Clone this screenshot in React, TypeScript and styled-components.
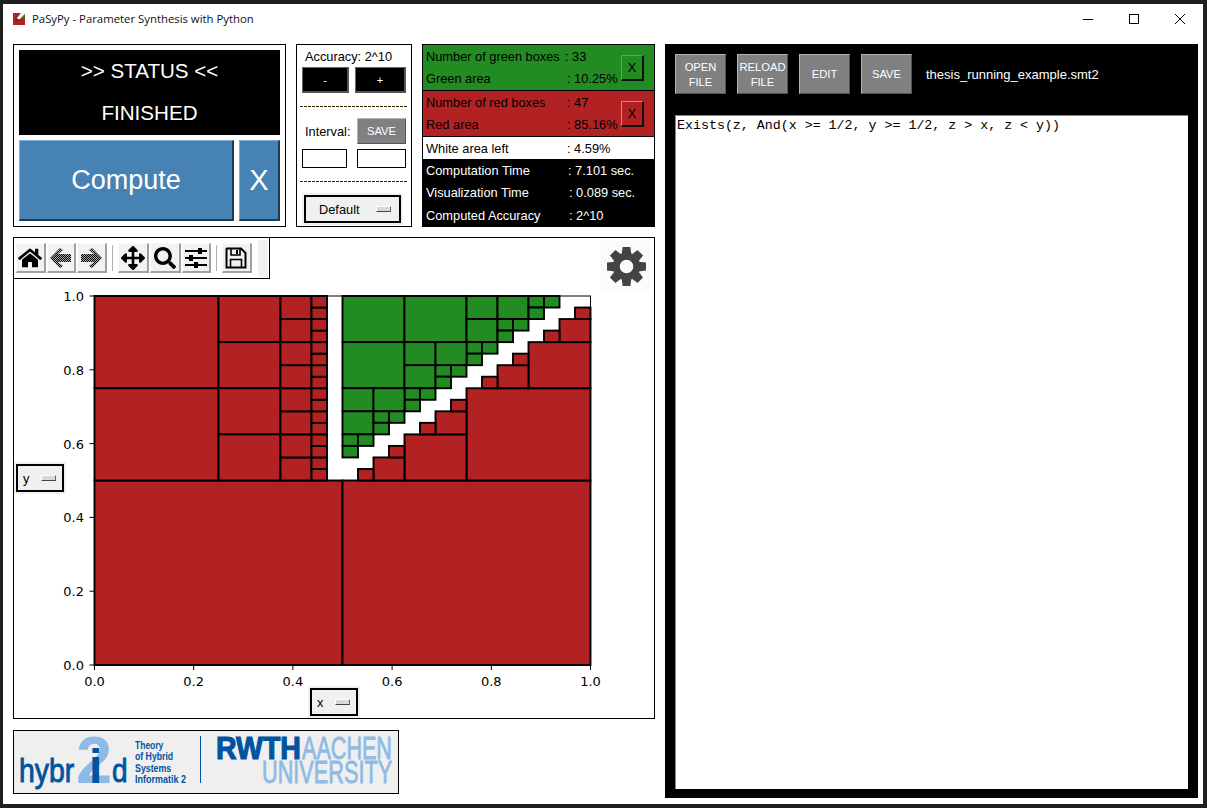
import React from 'react';
import styled, { createGlobalStyle } from 'styled-components';
import { FaArrowsAlt, FaHome, FaSearch } from 'react-icons/fa';

const GlobalStyle = createGlobalStyle`
  html, body {
    margin: 0;
    background: #1f1f1f;
  }
  * {
    box-sizing: border-box;
  }
`;

const sans = `"Liberation Sans", Arial, sans-serif`;

const Window = styled.div`
  width: 1200px;
  height: 800px;
  margin: 4px 0 0 3px;
  background: #fff;
  display: flex;
  flex-direction: column;
  font-family: ${sans};
  font-size: 12.8px;
  color: #000;
  overflow: hidden;
`;

const TitleBar = styled.div`
  height: 32px;
  flex: none;
  display: flex;
  align-items: center;
  padding: 0 0 3px 10px;
`;

const TitleText = styled.span`
  margin-left: 7px;
  flex: 1;
  font-family: "Open Sans", sans-serif;
  font-size: 11.35px;
  color: #111;
`;

const WindowButton = styled.div`
  width: 46px;
  height: 29px;
  display: flex;
  align-items: center;
  justify-content: center;
`;

const Content = styled.div`
  flex: 1;
  display: flex;
  gap: 10px;
  padding: 8px 5px 6px 10px;
`;

const LeftColumn = styled.div`
  width: 642px;
  flex: none;
  display: flex;
  flex-direction: column;
`;

const TopRow = styled.div`
  height: 183px;
  display: flex;
  gap: 10px;
`;

const StatusPanel = styled.div`
  width: 273px;
  border: 1px solid #000;
  padding: 5px;
  display: flex;
  flex-direction: column;
  gap: 5px;
`;

const StatusBox = styled.div`
  height: 85px;
  background: #000;
  color: #fff;
  font-size: 20.6px;
  line-height: 42px;
  text-align: center;
`;

const ComputeRow = styled.div`
  flex: 1;
  display: flex;
  gap: 5px;
`;

const BlueButton = styled.div<{ $width: number; $size: number }>`
  width: ${(p) => p.$width}px;
  background: steelblue;
  color: #fff;
  font-size: ${(p) => p.$size}px;
  display: flex;
  align-items: center;
  justify-content: center;
  border-style: solid;
  border-width: 1px 2px 2px 1px;
  border-color: #7ba9dc #1f3a55 #1f3a55 #7ba9dc;
`;

const AccuracyPanel = styled.div`
  width: 116px;
  border: 1px solid #000;
  padding: 0 5px;
  display: flex;
  flex-direction: column;
`;

const AccuracyLabel = styled.div`
  height: 22px;
  line-height: 23px;
  padding-left: 3px;
`;

const ControlRow = styled.div<{ $height: number; $top: number }>`
  height: ${(p) => p.$height}px;
  margin-top: ${(p) => p.$top}px;
  display: flex;
  justify-content: space-between;
  align-items: center;
`;

const StepButton = styled.div<{ $width: number }>`
  width: ${(p) => p.$width}px;
  height: 26px;
  background: #000;
  color: #fff;
  font-size: 11px;
  display: flex;
  align-items: center;
  justify-content: center;
  border-style: solid;
  border-width: 1px 2px 2px 1px;
  border-color: #666 #555 #555 #666;
`;

const Dashes = styled.div<{ $top: number }>`
  height: 1px;
  margin: ${(p) => p.$top}px -2px 0;
  background: repeating-linear-gradient(90deg, #3a2a00 0 3px, #fff 3px 4px);
`;

const IntervalLabel = styled.span`
  padding-left: 3px;
`;

const GrayButton = styled.div<{ $width: number; $height: number }>`
  width: ${(p) => p.$width}px;
  height: ${(p) => p.$height}px;
  flex: none;
  background: #808080;
  color: #fff;
  font-size: 11.2px;
  line-height: 15px;
  text-align: center;
  display: flex;
  align-items: center;
  justify-content: center;
  padding-top: 1px;
  border-style: solid;
  border-width: 1px;
  border-color: #b4b4b4 #555 #555 #b4b4b4;
`;

const Entry = styled.div<{ $width: number }>`
  width: ${(p) => p.$width}px;
  height: 19px;
  border: 1px solid #000;
  background: #fff;
`;

const OptionMenu = styled.div<{ $width: number; $height: number; $gap: number }>`
  width: ${(p) => p.$width}px;
  height: ${(p) => p.$height}px;
  border: 2px solid #000;
  background: #f0f0f0;
  box-shadow: 0 0 0 2px #f0f0f0;
  display: flex;
  align-items: center;
  gap: ${(p) => p.$gap}px;
  padding-left: 5px;
  font-size: 12.8px;
`;

const MenuLabel = styled.span<{ $indent: number }>`
  padding-left: ${(p) => p.$indent}px;
`;

const MenuIndicator = styled.div`
  width: 15px;
  height: 6px;
  flex: none;
  background: #d8d8d8;
  border-style: solid;
  border-width: 1px;
  border-color: #fff #666 #444 #fff;
`;

const MenuHolder = styled.div`
  margin: 13px 0 0 2px;
`;

const StatsPanel = styled.div`
  width: 233px;
  border: 1px solid #000;
  background: #000;
  display: flex;
  flex-direction: column;
`;

const StatsSection = styled.div<{ $bg: string; $fg: string; $height: number; $gapBelow?: boolean }>`
  height: ${(p) => p.$height}px;
  margin-bottom: ${(p) => (p.$gapBelow ? 1 : 0)}px;
  flex: none;
  background: ${(p) => p.$bg};
  color: ${(p) => p.$fg};
  display: flex;
  align-items: center;
  justify-content: space-between;
  padding: 0 10px 0 3px;
`;

const StatRow = styled.div`
  height: 22px;
  display: flex;
  align-items: center;
  white-space: pre;
`;

const StatLabel = styled.span<{ $width: number }>`
  width: ${(p) => p.$width}px;
  flex: none;
`;

const ClearButton = styled.div<{ $light: string }>`
  width: 23px;
  height: 26px;
  display: flex;
  align-items: center;
  justify-content: center;
  font-size: 12.8px;
  border-style: solid;
  border-width: 1px 2px 2px 1px;
  border-color: ${(p) => p.$light} #111 #111 ${(p) => p.$light};
`;

const PlotPanel = styled.div`
  position: relative;
  height: 482px;
  margin-top: 10px;
  border: 1px solid #000;
  display: flex;
  flex-direction: column;
`;

const Toolbar = styled.div`
  width: 256px;
  height: 41px;
  flex: none;
  display: flex;
  align-items: center;
  padding-left: 2px;
  border-right: 1px solid #000;
  border-bottom: 1px solid #000;
`;

const ToolButton = styled.div<{ $wide?: boolean }>`
  width: ${(p) => (p.$wide ? 31 : 29.5)}px;
  height: 30px;
  margin-right: 1px;
  flex: none;
  background: #f2f2f2;
  border-style: solid;
  border-width: 1px 2px 2px 1px;
  border-color: #fafafa #a0a0a0 #a0a0a0 #fafafa;
  display: flex;
  align-items: center;
  justify-content: center;
  color: #000;
`;

const ToolSeparator = styled.div`
  width: 1px;
  height: 26px;
  flex: none;
  margin: 0 5px 0 4px;
  background: #b0b0b0;
`;

const ToolbarEnd = styled.div`
  width: 10px;
  height: 37px;
  margin-left: 5px;
  background: #f0f0f0;
`;

const GearBox = styled.div`
  position: absolute;
  left: 587px;
  top: 3px;
  width: 50px;
  height: 50px;
  background: #fbfbfb;
  display: flex;
  align-items: center;
  justify-content: center;
`;

const AxisMenu = styled.div<{ $left: number; $top: number }>`
  position: absolute;
  left: ${(p) => p.$left}px;
  top: ${(p) => p.$top}px;
`;

const Chart = styled.svg`
  display: block;
  flex: none;
`;

const LogoBox = styled.div`
  width: 386px;
  height: 64px;
  margin-top: 11px;
  border: 1px solid #000;
  background: #efefef;
`;

const EditorPanel = styled.div`
  flex: 1;
  background: #000;
  padding: 10px 10px 9px;
  display: flex;
  flex-direction: column;
`;

const EditorToolbar = styled.div`
  height: 40px;
  flex: none;
  display: flex;
  align-items: center;
  gap: 11px;
`;

const FileName = styled.span`
  margin-left: 3px;
  padding-top: 1px;
  color: #fff;
  font-size: 13px;
`;

const Editor = styled.div`
  flex: 1;
  margin-top: 21px;
  background: #fff;
  border-top: 1px solid #888;
  border-left: 1px solid #888;
  padding: 1px 0 0 1px;
  font-family: "Liberation Mono", "Courier New", monospace;
  font-size: 13.3px;
  line-height: 17px;
  white-space: pre;
`;

// every box is a square, given as [x, y, size] in 1/32 of the unit square
type Box = [number, number, number];

const redBoxes: Box[] = [
  [0, 0, 16], [16, 0, 16], [0, 24, 8], [0, 16, 8],
  [8, 28, 4], [8, 24, 4], [8, 20, 4], [8, 16, 4],
  ...Array.from({ length: 8 }, (_, i): Box => [12, 16 + 2 * i, 2]),
  ...Array.from({ length: 16 }, (_, i): Box => [14, 16 + i, 1]),
  [24, 16, 8], [20, 16, 4], [28, 24, 4],
  [18, 16, 2], [22, 20, 2], [26, 24, 2], [30, 28, 2],
  [17, 16, 1], [19, 18, 1], [21, 20, 1], [23, 22, 1],
  [25, 24, 1], [27, 26, 1], [29, 28, 1], [31, 30, 1],
];

const greenBoxes: Box[] = [
  [16, 28, 4], [20, 28, 4], [16, 24, 4],
  [24, 30, 2], [26, 30, 2], [24, 28, 2],
  [28, 31, 1], [29, 31, 1], [28, 30, 1],
  [26, 29, 1], [27, 29, 1], [26, 28, 1],
  [24, 27, 1], [25, 27, 1], [24, 26, 1],
  [20, 26, 2], [22, 26, 2], [20, 24, 2],
  [22, 25, 1], [23, 25, 1], [22, 24, 1],
  [20, 23, 1], [21, 23, 1], [20, 22, 1],
  [16, 22, 2], [18, 22, 2], [16, 20, 2],
  [18, 21, 1], [19, 21, 1], [18, 20, 1],
  [16, 19, 1], [17, 19, 1], [16, 18, 1],
];

const plot = { left: 80.5, top: 17, width: 496, height: 369 };
const ticks = [0, 0.2, 0.4, 0.6, 0.8, 1];

const BoxRects: React.FC<{ boxes: Box[]; fill: string }> = ({ boxes, fill }) => (
  <>
    {boxes.map(([x, y, s]) => (
      <rect
        key={`${x}-${y}`}
        x={plot.left + (x / 32) * plot.width}
        y={plot.top + ((32 - y - s) / 32) * plot.height}
        width={(s / 32) * plot.width}
        height={(s / 32) * plot.height}
        fill={fill}
        stroke='#000'
        strokeWidth={1.9}
      />
    ))}
  </>
);

const BoxChart: React.FC = () => {
  const labelStyle = { fontFamily: '"DejaVu Sans", sans-serif', fontSize: 13 };
  return (
    <Chart width={640} height={440}>
      <BoxRects boxes={redBoxes} fill='#b22222' />
      <BoxRects boxes={greenBoxes} fill='#228b22' />
      <rect
        x={plot.left}
        y={plot.top}
        width={plot.width}
        height={plot.height}
        fill='none'
        stroke='#000'
      />
      {ticks.map((t) => {
        const x = plot.left + t * plot.width;
        const y = plot.top + (1 - t) * plot.height;
        return (
          <g key={t} fill='#000' style={labelStyle}>
            <line x1={x} x2={x} y1={plot.top + plot.height} y2={plot.top + plot.height + 5} stroke='#000' />
            <line x1={plot.left - 5} x2={plot.left} y1={y} y2={y} stroke='#000' />
            <text x={x} y={407} textAnchor='middle'>{t.toFixed(1)}</text>
            <text x={70} y={y + 5} textAnchor='end'>{t.toFixed(1)}</text>
          </g>
        );
      })}
    </Chart>
  );
};

const AppIcon: React.FC = () => (
  <svg width={12} height={12} viewBox='0 0 12 12'>
    <rect width={12} height={12} fill='#b22222' />
    <path d='M6 7 L12 1 V0 H8 L4 5 Z' fill='#fff' />
    <path d='M8 5 L12 1 V5 Z' fill='#228b22' />
    <path d='M2 7 H7' stroke='#222' />
  </svg>
);

const DitherArrow: React.FC<{ flip?: boolean; id: string }> = ({ flip, id }) => (
  <svg width={25} height={22} viewBox='0 0 25 22'>
    <defs>
      <pattern id={id} width={2} height={2} patternUnits='userSpaceOnUse'>
        <rect width={1.3} height={1.3} fill='#000' />
        <rect x={1} y={1} width={1.3} height={1.3} fill='#000' />
      </pattern>
    </defs>
    <path
      d='M2 11 L12 1 L15 3 L10 7 H23 V15 H10 L15 19 L12 21 Z'
      fill={`url(#${id})`}
      transform={flip ? 'matrix(-1 0 0 1 25 0)' : undefined}
    />
  </svg>
);

const SlidersIcon: React.FC = () => (
  <svg width={22} height={22} viewBox='0 0 22 22'>
    <g stroke='#000' strokeWidth={2}>
      <path d='M0 4 H22 M0 11 H22 M0 18 H22' />
    </g>
    <rect x={13} y={1} width={4} height={6} fill='#000' />
    <rect x={4} y={8} width={4} height={6} fill='#000' />
    <rect x={9} y={15} width={4} height={6} fill='#000' />
  </svg>
);

const FloppyIcon: React.FC = () => (
  <svg width={22} height={22} viewBox='0 0 22 22'>
    <path d='M2 1.5 H16 L20.5 6 V20.5 H1.5 V2 Z' fill='none' stroke='#000' strokeWidth={2} />
    <path d='M6 2 V8 H15 V2' fill='none' stroke='#000' strokeWidth={1.6} />
    <rect x={11} y={3} width={2} height={4} fill='#000' />
    <path d='M5.5 20 V12.5 H16.5 V20' fill='none' stroke='#000' strokeWidth={1.6} />
  </svg>
);

const GearIcon: React.FC = () => (
  <svg width={39} height={39} viewBox='-20 -20 40 40'>
    {[0, 45, 90, 135, 180, 225, 270, 315].map((angle) => (
      <path key={angle} d='M-4 -20 H4 L5 -12 H-5 Z' fill='#444' transform={`rotate(${angle})`} />
    ))}
    <circle r={10.5} fill='none' stroke='#444' strokeWidth={7} />
  </svg>
);

const LogoText: React.FC<{
  x: number;
  y: number;
  size: number;
  squeeze?: number;
  bold?: boolean;
  heavy?: number;
  fill: string;
  children: string;
}> = ({ x, y, size, squeeze = 1, bold, heavy = 0, fill, children }) => (
  <text
    transform={`translate(${x} ${y}) scale(${squeeze} 1)`}
    fontSize={size}
    fontWeight={bold ? 700 : 400}
    fill={fill}
    stroke={heavy ? fill : undefined}
    strokeWidth={heavy}
  >
    {children}
  </text>
);

const LogoArt: React.FC = () => {
  const dark = '#00549f';
  const light = '#8ebae5';
  const lines: [string, number, number][] = [
    ['Theory', 18, 0.81],
    ['of Hybrid', 29, 0.83],
    ['Systems', 41, 0.84],
    ['Informatik 2', 52, 0.86],
  ];
  return (
    <svg width={384} height={62} fontFamily={sans}>
      <LogoText x={5} y={51} size={33} squeeze={0.86} heavy={0.9} fill={dark}>hybr</LogoText>
      <LogoText x={62} y={52} size={67} squeeze={0.97} bold fill={light}>2</LogoText>
      <LogoText x={75} y={52} size={48} bold fill={dark}>i</LogoText>
      <LogoText x={98} y={51} size={33} squeeze={0.85} heavy={0.9} fill={dark}>d</LogoText>
      {lines.map(([line, y, squeeze]) => (
        <LogoText key={line} x={121} y={y} size={10.5} squeeze={squeeze} bold fill={dark}>{line}</LogoText>
      ))}
      <line x1={186.5} x2={186.5} y1={5} y2={52} stroke={dark} />
      <LogoText x={202} y={28} size={32} squeeze={0.89} bold heavy={1.2} fill={dark}>RWTH</LogoText>
      <LogoText x={288} y={28} size={32} squeeze={0.675} heavy={0.8} fill={light}>AACHEN</LogoText>
      <LogoText x={248} y={52} size={31} squeeze={0.7} heavy={0.8} fill={light}>UNIVERSITY</LogoText>
    </svg>
  );
};

const Stat: React.FC<{ label: string; width: number; value: string }> = ({ label, width, value }) => (
  <StatRow>
    <StatLabel $width={width}>{label}</StatLabel>
    {`: ${value}`}
  </StatRow>
);

const App: React.FC = () => {
  return (
    <Window>
      <GlobalStyle />
      <TitleBar>
        <AppIcon />
        <TitleText>PaSyPy - Parameter Synthesis with Python</TitleText>
        <WindowButton>
          <svg width={10} height={10}><path d='M0 5.5 H10' stroke='#000' /></svg>
        </WindowButton>
        <WindowButton>
          <svg width={10} height={10}><rect x={0.5} y={0.5} width={9} height={9} fill='none' stroke='#000' /></svg>
        </WindowButton>
        <WindowButton>
          <svg width={10} height={10}><path d='M0 0 L10 10 M10 0 L0 10' stroke='#000' /></svg>
        </WindowButton>
      </TitleBar>
      <Content>
        <LeftColumn>
          <TopRow>
            <StatusPanel>
              <StatusBox>
                <div>&gt;&gt; STATUS &lt;&lt;</div>
                <div>FINISHED</div>
              </StatusBox>
              <ComputeRow>
                <BlueButton $width={215} $size={27}>Compute</BlueButton>
                <BlueButton $width={41} $size={29}>X</BlueButton>
              </ComputeRow>
            </StatusPanel>
            <AccuracyPanel>
              <AccuracyLabel>Accuracy: 2^10</AccuracyLabel>
              <ControlRow $height={26} $top={0}>
                <StepButton $width={47}>-</StepButton>
                <StepButton $width={51}>+</StepButton>
              </ControlRow>
              <Dashes $top={13} />
              <ControlRow $height={26} $top={11}>
                <IntervalLabel>Interval:</IntervalLabel>
                <GrayButton $width={49} $height={26}>SAVE</GrayButton>
              </ControlRow>
              <ControlRow $height={19} $top={5}>
                <Entry $width={45} />
                <Entry $width={49} />
              </ControlRow>
              <Dashes $top={13} />
              <MenuHolder>
                <OptionMenu $width={97} $height={28} $gap={16}>
                  <MenuLabel $indent={8}>Default</MenuLabel>
                  <MenuIndicator />
                </OptionMenu>
              </MenuHolder>
            </AccuracyPanel>
            <StatsPanel>
              <StatsSection $bg='#228b22' $fg='#000' $height={45} $gapBelow>
                <div>
                  <Stat label='Number of green boxes' width={139} value='33' />
                  <Stat label='Green area' width={141} value='10.25%' />
                </div>
                <ClearButton $light='#57a957'>X</ClearButton>
              </StatsSection>
              <StatsSection $bg='#b22222' $fg='#000' $height={45} $gapBelow>
                <div>
                  <Stat label='Number of red boxes' width={141} value='47' />
                  <Stat label='Red area' width={141} value='85.16%' />
                </div>
                <ClearButton $light='#e87a7a'>X</ClearButton>
              </StatsSection>
              <StatsSection $bg='#fff' $fg='#000' $height={22}>
                <Stat label='White area left' width={141} value='4.59%' />
              </StatsSection>
              <StatsSection $bg='#000' $fg='#fff' $height={22}>
                <Stat label='Computation Time' width={142} value='7.101 sec.' />
              </StatsSection>
              <StatsSection $bg='#000' $fg='#fff' $height={22}>
                <Stat label='Visualization Time' width={143} value='0.089 sec.' />
              </StatsSection>
              <StatsSection $bg='#000' $fg='#fff' $height={24}>
                <Stat label='Computed Accuracy' width={143} value='2^10' />
              </StatsSection>
            </StatsPanel>
          </TopRow>
          <PlotPanel>
            <Toolbar>
              <ToolButton><FaHome size={24} /></ToolButton>
              <ToolButton><DitherArrow id='dither-back' /></ToolButton>
              <ToolButton><DitherArrow id='dither-forward' flip /></ToolButton>
              <ToolSeparator />
              <ToolButton $wide><FaArrowsAlt size={24} /></ToolButton>
              <ToolButton $wide><FaSearch size={22} /></ToolButton>
              <ToolButton><SlidersIcon /></ToolButton>
              <ToolSeparator />
              <ToolButton><FloppyIcon /></ToolButton>
              <ToolbarEnd />
            </Toolbar>
            <BoxChart />
            <GearBox><GearIcon /></GearBox>
            <AxisMenu $left={2} $top={226}>
              <OptionMenu $width={48} $height={28} $gap={12}>
                <span>y</span>
                <MenuIndicator />
              </OptionMenu>
            </AxisMenu>
            <AxisMenu $left={296} $top={450}>
              <OptionMenu $width={48} $height={28} $gap={12}>
                <span>x</span>
                <MenuIndicator />
              </OptionMenu>
            </AxisMenu>
          </PlotPanel>
          <LogoBox><LogoArt /></LogoBox>
        </LeftColumn>
        <EditorPanel>
          <EditorToolbar>
            <GrayButton $width={51} $height={40}>OPEN<br />FILE</GrayButton>
            <GrayButton $width={51} $height={40}>RELOAD<br />FILE</GrayButton>
            <GrayButton $width={51} $height={40}>EDIT</GrayButton>
            <GrayButton $width={51} $height={40}>SAVE</GrayButton>
            <FileName>thesis_running_example.smt2</FileName>
          </EditorToolbar>
          <Editor>Exists(z, And(x &gt;= 1/2, y &gt;= 1/2, z &gt; x, z &lt; y))</Editor>
        </EditorPanel>
      </Content>
    </Window>
  );
};

export default App;
